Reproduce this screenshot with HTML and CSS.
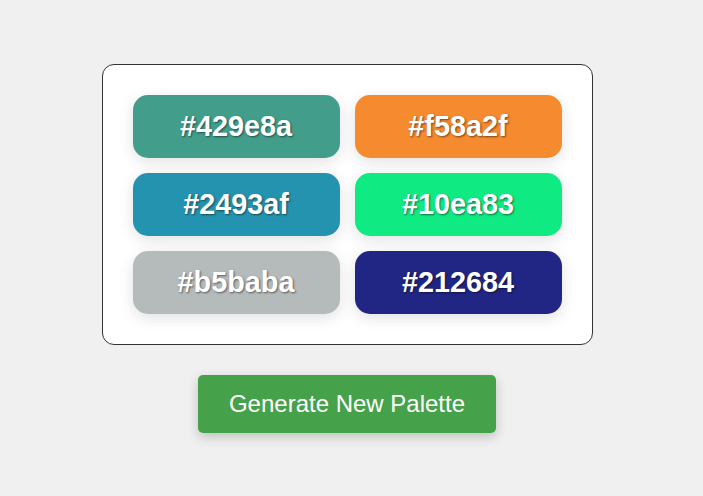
FILE: index.html
```html
<!DOCTYPE html>
<html>
<head>
<meta charset="utf-8">
<link rel="stylesheet" href="styles.css">
</head>
<body>
<main class="page">
  <div class="palette">
    <div class="swatch" style="background:#429e8a">#429e8a</div>
    <div class="swatch" style="background:#f58a2f">#f58a2f</div>
    <div class="swatch" style="background:#2493af">#2493af</div>
    <div class="swatch" style="background:#10ea83">#10ea83</div>
    <div class="swatch" style="background:#b5baba">#b5baba</div>
    <div class="swatch" style="background:#212684">#212684</div>
  </div>
  <button class="generate">Generate New Palette</button>
</main>
</body>
</html>
```
FILE: styles.css
```css
html, body {
  margin: 0;
  padding: 0;
  background: #f0f0f0;
  font-family: "Liberation Sans", Arial, sans-serif;
}
.page {
  height: 496px;
  box-sizing: border-box;
  padding-right: 9px;
  display: flex;
  flex-direction: column;
  align-items: center;
  justify-content: center;
  gap: 30px;
}
.palette {
  background: #fff;
  border: 1px solid #333;
  border-radius: 12px;
  padding: 30px;
  display: grid;
  grid-template-columns: 207px 207px;
  grid-auto-rows: 63px;
  gap: 15px;
}
.swatch {
  border-radius: 15px;
  display: flex;
  align-items: center;
  justify-content: center;
  color: #fff;
  font-weight: bold;
  font-size: 28.8px;
  text-shadow: 1px 1px 2px rgba(0,0,0,0.5);
  box-shadow: 0 4px 15px rgba(0,0,0,0.12);
}
.generate {
  font-family: "Liberation Sans", Arial, sans-serif;
  font-size: 24px;
  color: #fff;
  background: #46a24a;
  border: none;
  border-radius: 5px;
  padding: 0 31px;
  height: 58px;
  box-shadow: 0 4px 12px rgba(0,0,0,0.2);
  cursor: pointer;
}
```
